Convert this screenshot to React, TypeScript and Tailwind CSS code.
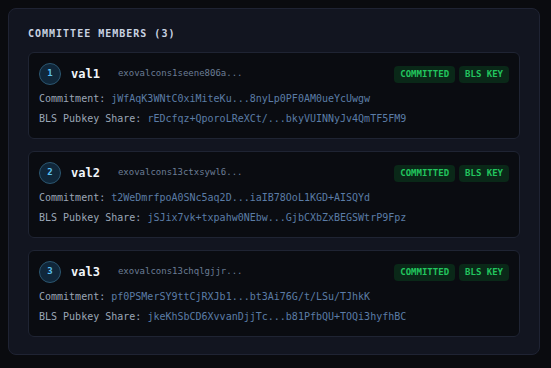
import React from "react";

// committee members with their truncated keys
const members = [
  {
    n: 1,
    name: "val1",
    addr: "exovalcons1seene806a...",
    commitment: "jWfAqK3WNtC0xiMiteKu...8nyLp0PF0AM0ueYcUwgw",
    bls: "rEDcfqz+QporoLReXCt/...bkyVUINNyJv4QmTF5FM9",
  },
  {
    n: 2,
    name: "val2",
    addr: "exovalcons13ctxsywl6...",
    commitment: "t2WeDmrfpoA0SNc5aq2D...iaIB78OoL1KGD+AISQYd",
    bls: "jSJix7vk+txpahw0NEbw...GjbCXbZxBEGSWtrP9Fpz",
  },
  {
    n: 3,
    name: "val3",
    addr: "exovalcons13chqlgjjr...",
    commitment: "pf0PSMerSY9ttCjRXJb1...bt3Ai76G/t/LSu/TJhkK",
    bls: "jkeKhSbCD6XvvanDjjTc...b81PfbQU+TOQi3hyfhBC",
  },
];

function Badge({ children }: { children: React.ReactNode }) {
  return (
    <span className="px-1.5 h-[17px] flex items-center rounded bg-[#0a2818] text-[#22c55e] text-[9px] font-bold leading-none">
      {children}
    </span>
  );
}

export default function App() {
  return (
    <div
      className="min-h-[368px] bg-[#0a0b0f] p-2"
      style={{ fontFamily: '"DejaVu Sans Mono", "Liberation Mono", monospace' }}
    >
      <div className="w-[532px] rounded-lg border border-[#1f2333] bg-[#121520] px-[19px] pt-[17px] pb-[17px]">
        <h2 className="text-[10px] leading-[15px] font-bold tracking-widest text-[#c9d3e2] mb-[11px]">
          COMMITTEE MEMBERS ({members.length})
        </h2>

        <div className="flex flex-col gap-3">
          {members.map((m) => (
            <div
              key={m.n}
              className="rounded-md border border-[#1f2433] bg-[#0a0c11] px-[10px] pt-[10px] pb-[11px]"
            >
              <div className="flex items-center h-[22px]">
                <div className="w-[22px] h-[22px] rounded-full border border-[#2b5670] bg-[#10273a] flex items-center justify-center text-[9px] font-bold text-[#5cc3f2]">
                  {m.n}
                </div>
                <span className="ml-[10px] text-[12px] font-bold text-[#f1f5f9]">{m.name}</span>
                <span className="ml-[18px] text-[9px] text-[#6b7d95]">{m.addr}</span>
                <div className="ml-auto flex gap-1">
                  <Badge>COMMITTED</Badge>
                  <Badge>BLS KEY</Badge>
                </div>
              </div>
              <div className="mt-[6px] flex flex-col gap-1 text-[10px] leading-4">
                <div className="whitespace-nowrap">
                  <span className="text-[#9aa6b6]">Commitment: </span>
                  <span className="text-[#5b7ca6]">{m.commitment}</span>
                </div>
                <div className="whitespace-nowrap">
                  <span className="text-[#9aa6b6]">BLS Pubkey Share: </span>
                  <span className="text-[#5b7ca6]">{m.bls}</span>
                </div>
              </div>
            </div>
          ))}
        </div>
      </div>
    </div>
  );
}
